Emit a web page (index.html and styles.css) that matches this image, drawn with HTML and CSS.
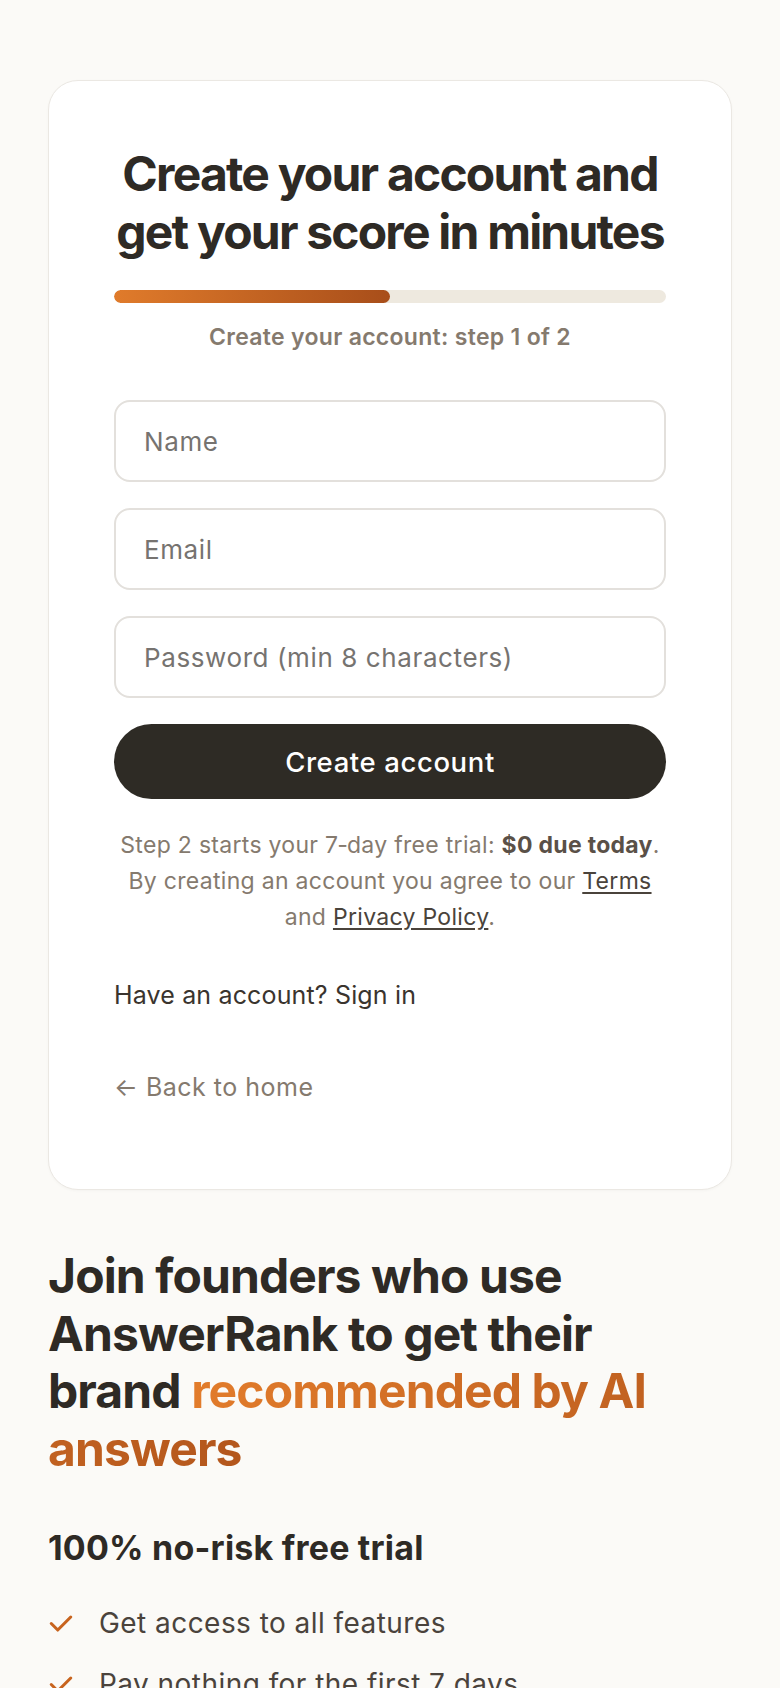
FILE: index.html
```html
<!DOCTYPE html>
<html lang="en">
<head>
<meta charset="UTF-8" />
<meta name="viewport" content="width=device-width, initial-scale=1" />
<title>Create your account - AnswerRank</title>
<link rel="stylesheet" href="styles.css">
</head>
<body>
<main class="page">
  <section class="card" aria-label="Sign up">
    <h1 class="card-title">Create your account and get your score in minutes</h1>

    <div class="progress" role="progressbar" aria-valuenow="1" aria-valuemin="0" aria-valuemax="2">
      <div class="progress-fill"></div>
    </div>
    <p class="step">Create your account: step 1 of 2</p>

    <form class="signup" onsubmit="return false;">
      <input class="field" type="text" name="name" placeholder="Name" />
      <input class="field" type="email" name="email" placeholder="Email" />
      <input class="field" type="password" name="password" placeholder="Password (min 8 characters)" />
      <button class="submit" type="submit">Create account</button>
    </form>

    <p class="fineprint">
      Step 2 starts your 7&#8209;day free trial: <strong>$0 due today</strong>.
      By creating an account you agree to our <a href="#">Terms</a>
      and <a href="#">Privacy Policy</a>.
    </p>

    <p class="signin">Have an account? <a href="#">Sign in</a></p>

    <a class="back" href="#">&larr; Back to home</a>
  </section>

  <section class="pitch">
    <h2 class="pitch-title">Join founders who use AnswerRank to get their brand <span class="accent">recommended by AI answers</span></h2>

    <h3 class="trial">100% no-risk free trial</h3>
    <ul class="perks">
      <li>
        <svg class="tick" viewBox="0 0 24 24" aria-hidden="true"><path d="M3 12.5l6 6L21 6.5" /></svg>
        Get access to all features
      </li>
      <li>
        <svg class="tick" viewBox="0 0 24 24" aria-hidden="true"><path d="M3 12.5l6 6L21 6.5" /></svg>
        Pay nothing for the first 7 days
      </li>
      <li>
        <svg class="tick" viewBox="0 0 24 24" aria-hidden="true"><path d="M3 12.5l6 6L21 6.5" /></svg>
        Cancel anytime in one click
      </li>
    </ul>
  </section>
</main>
</body>
</html>
```

FILE: styles.css
```css
html, body {
  margin: 0;
  padding: 0;
  background: #fbfaf7;
  font-family: Inter, 'Noto Sans', sans-serif;
  color: #2e2a25;
}
.page {
  padding: 80px 48px 40px;
}

/* Sign-up card */
.card {
  background: #fff;
  border: 1px solid #ebe8e3;
  border-radius: 30px;
  padding: 64px 65px 83px;
  box-shadow: 0 1px 3px rgba(0,0,0,0.03);
}
.card-title {
  margin: 0 -20px;
  font-size: 48px;
  line-height: 58px;
  font-weight: 700;
  letter-spacing: -1.8px;
  text-align: center;
}
.progress {
  margin-top: 29px;
  height: 13px;
  border-radius: 7px;
  background: #eee9df;
  overflow: hidden;
}
.progress-fill {
  width: 50%;
  height: 100%;
  border-radius: 7px;
  background: linear-gradient(90deg, #e07b2b, #a84e1a);
}
.step {
  margin: 18px 0 0;
  font-size: 23px;
  line-height: 32px;
  font-weight: 600;
  color: #857a6e;
  text-align: center;
  letter-spacing: 0.3px;
}

.signup {
  margin-top: 47px;
  display: flex;
  flex-direction: column;
  gap: 26px;
}
.field {
  box-sizing: border-box;
  height: 82px;
  padding: 0 28px;
  border: 2px solid #e3e0dc;
  border-radius: 16px;
  font-family: inherit;
  font-size: 26px;
  color: #2e2a25;
  background: #fff;
  outline: none;
  letter-spacing: 0.6px;
}
.field::placeholder {
  color: #767370;
}
.submit {
  height: 75px;
  border: none;
  border-radius: 38px;
  background: #2e2b25;
  color: #fff;
  font-family: inherit;
  font-size: 27.5px;
  font-weight: 500;
  letter-spacing: 0.6px;
  cursor: pointer;
}

.fineprint {
  margin: 28px 0 0;
  font-size: 23px;
  line-height: 36px;
  color: #857a6e;
  text-align: center;
  letter-spacing: 0.3px;
}
.fineprint strong {
  color: #5a5047;
  font-weight: 700;
}
.fineprint a {
  color: #4a433b;
  text-decoration: underline;
  text-underline-offset: 3px;
}
.signin {
  margin: 42px 0 0;
  font-size: 25px;
  line-height: 37px;
  color: #3a342e;
  letter-spacing: 0.15px;
}
.signin a {
  color: inherit;
  text-decoration: none;
}
.back {
  display: block;
  margin-top: 55px;
  font-size: 25px;
  line-height: 37px;
  color: #857a6e;
  text-decoration: none;
  letter-spacing: 0.5px;
}

/* Pitch section below the card */
.pitch-title {
  max-width: 650px;
  margin: 57px 0 0;
  font-size: 48px;
  line-height: 57.6px;
  font-weight: 700;
  letter-spacing: -0.9px;
  color: #2e2a25;
}
.accent {
  background: linear-gradient(90deg, #e27c2b, #b3561c);
  -webkit-background-clip: text;
  background-clip: text;
  color: transparent;
}
.trial {
  margin: 49px 0 0;
  font-size: 34px;
  line-height: 43px;
  font-weight: 700;
  letter-spacing: 0.2px;
}
.perks {
  list-style: none;
  margin: 23px 0 0;
  padding: 0;
}
.perks li {
  display: flex;
  align-items: center;
  gap: 25px;
  height: 61px;
  font-size: 28px;
  color: #4a433c;
  letter-spacing: 0.45px;
}
.tick {
  width: 26px;
  height: 26px;
  flex: none;
  fill: none;
  stroke: #c8641e;
  stroke-width: 2.8;
  stroke-linecap: round;
  stroke-linejoin: round;
}
```
